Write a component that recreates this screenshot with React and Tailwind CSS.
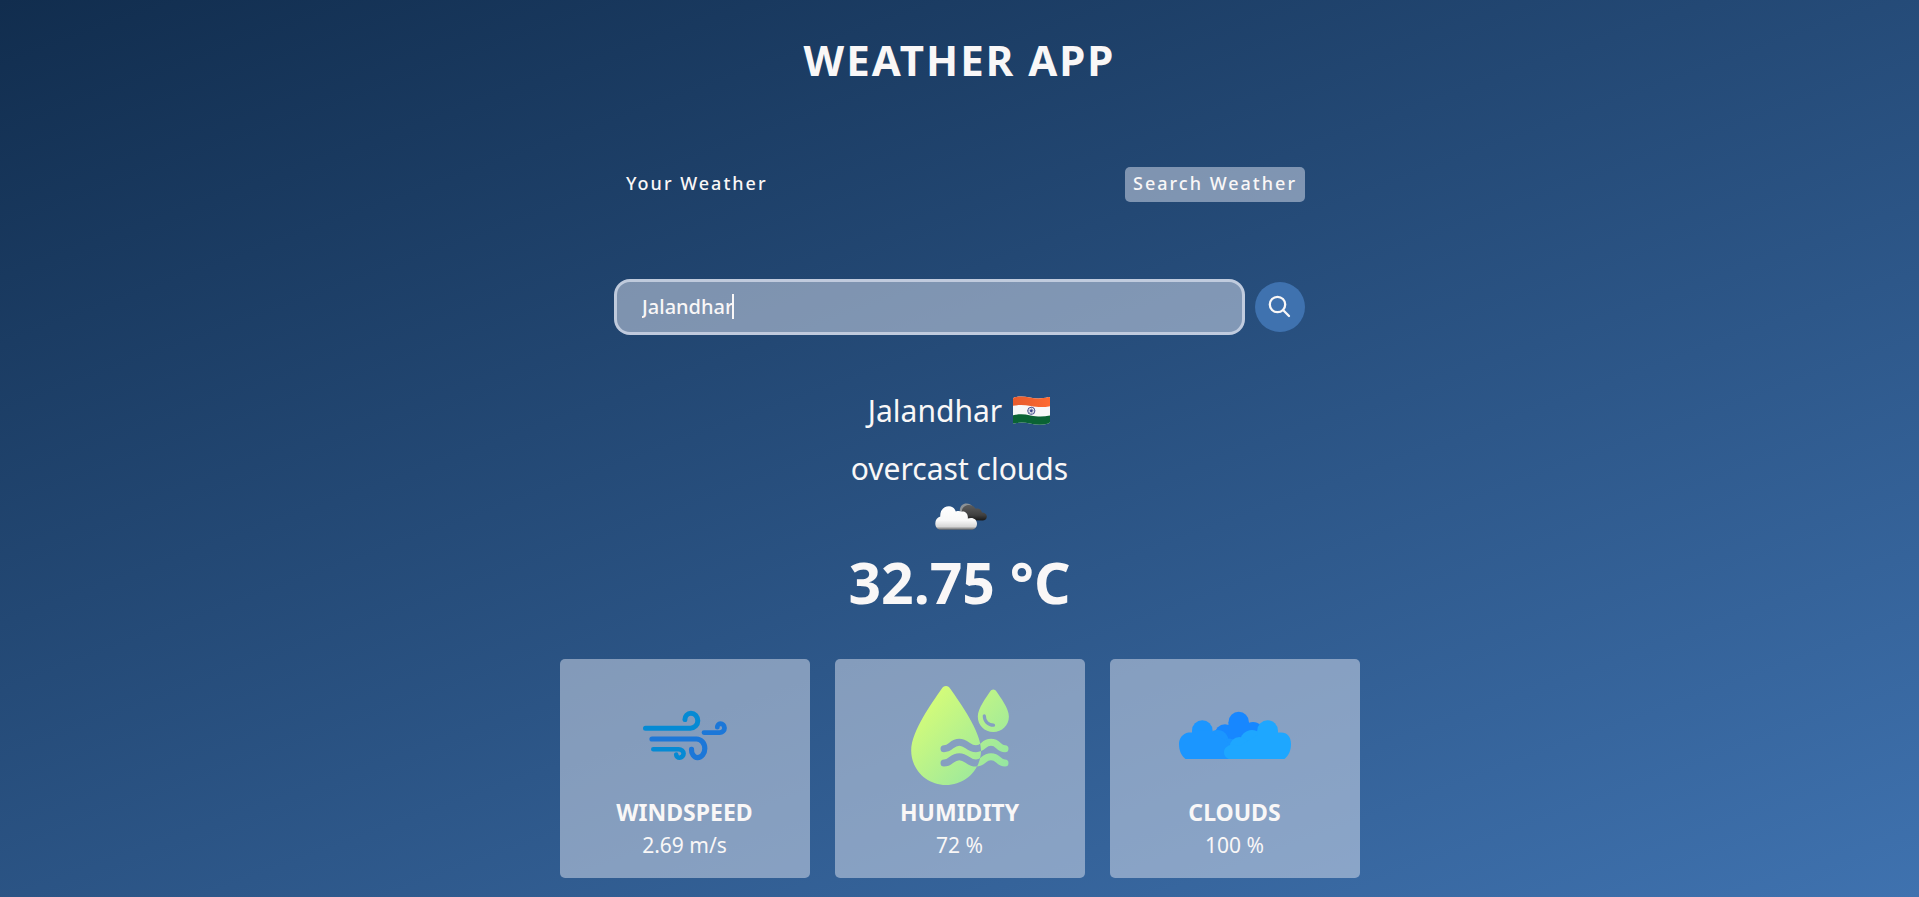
import React, { useState } from "react";

const WAVE =
  "C61 78.7 61.5 72.3 69.3 72.3S78 78.7 86 78.7S93 72.3 101 72.3S108 78.7 115 78.7";
const BIG_DROP =
  "M56 16C58 16 59.3 17.2 60.5 19C70 33 91 61 91 80.5C91 99.5 75.500 115 56 115S21.200 99.500 21.200 80.500C21.200 61 42 33 51.500 19C52.700 17.200 54 16 56 16Z";

function WindIcon() {
  return (
    <svg viewBox="15 -5 100 100" className="h-[100px] w-[100px]" fill="none" strokeLinecap="round" strokeLinejoin="round" aria-hidden="true">
      <g stroke="#058ad4">
        <path strokeWidth="5" d="M25.500 38.300H70.300A7.500 7.500 0 0 0 77.800 30.800A6.900 7.600 0 0 0 70.900 23.200A6 6.200 0 0 0 64.900 29.600" />
        <path strokeWidth="4.600" d="M33.300 59.200H58.500A5 4.400 0 0 1 63.600 63.600A4.200 4.100 0 0 1 59.500 67.700A3.300 3.300 0 0 1 56.200 64.600" />
      </g>
      <g stroke="#1c77d8">
        <path strokeWidth="5.200" d="M32 49H76.500A8.300 9.500 0 0 1 84.800 58.500A7.400 9.200 0 0 1 77.600 67.700A6.600 7.800 0 0 1 71.500 59.300" />
        <path strokeWidth="4.800" d="M84 42.600H99.500A4.900 4.700 0 0 0 104.500 37.900A4.100 4.200 0 0 0 100.400 33.700A3.200 3.400 0 0 0 97.300 37.200" />
      </g>
    </svg>
  );
}

function HumidityIcon() {
  return (
    <svg viewBox="20 15 100 100" className="h-[100px] w-[100px]" fill="none" aria-hidden="true">
      <defs>
        <linearGradient id="lime" gradientUnits="userSpaceOnUse" x1="34" y1="34" x2="108" y2="104">
          <stop offset="0" stopColor="#d4fc79" />
          <stop offset="1" stopColor="#96e6a1" />
        </linearGradient>
        <mask id="cutWaves" maskUnits="userSpaceOnUse" x="0" y="0" width="140" height="130">
          <rect width="140" height="130" fill="white" />
          <g stroke="black" strokeWidth="7" strokeLinecap="round">
            <path d={"M54 78.7" + WAVE} />
            <path d={"M54 78.7" + WAVE} transform="translate(0 14.400)" />
          </g>
        </mask>
        <mask id="cutDrop" maskUnits="userSpaceOnUse" x="0" y="0" width="140" height="130">
          <rect width="140" height="130" fill="white" />
          <path d={BIG_DROP} fill="black" />
        </mask>
      </defs>
      <path d={BIG_DROP} fill="url(#lime)" mask="url(#cutWaves)" />
      <g mask="url(#cutDrop)" stroke="url(#lime)" strokeWidth="7" strokeLinecap="round">
        <path d={"M54 78.7" + WAVE} />
        <path d="M54 93.1C61 93.1 61.500 86.700 69.300 86.700S78 93.100 86 93.100S93 86.700 101 86.700S108 93.100 115 93.100" />
      </g>
      <path
        fill="url(#lime)"
        d="M103.300 19.400C104.600 19.400 105.500 20.100 106.300 21.300C110.500 27.500 118.900 38.500 118.900 46.500C118.900 55.300 112 62 103.300 62S87.800 55.300 87.800 46.500C87.800 38.500 96.200 27.500 100.300 21.300C101.100 20.100 102 19.400 103.300 19.400Z"
      />
      <path d="M94.300 45.800C94.300 51.300 98.300 55.200 103.500 55.200" stroke="#859fc1" strokeWidth="3.200" strokeLinecap="round" />
    </svg>
  );
}

function CloudsIcon() {
  return (
    <svg viewBox="15 -5 120 100" className="h-[100px] w-[120px]" aria-hidden="true">
      <g fill="#1787ff">
        <circle cx="78.700" cy="32" r="10.200" />
        <circle cx="65" cy="44.500" r="10.300" />
        <circle cx="93" cy="42.500" r="10.600" />
        <path d="M57 44H100V66H57Z" />
        <path d="M68.500 32H89V45H68.500Z" />
      </g>
      <g fill="#1b96ff">
        <circle cx="42.300" cy="40.500" r="10.300" />
        <circle cx="57.500" cy="51" r="11" />
        <circle cx="69" cy="58" r="9.500" />
        <path d="M28.500 42.500C22.500 43.500 19 48.500 19 54C19 60 21 65.500 25.500 69H74V56L52 42.500V40.500H32V42.500Z" />
      </g>
      <g fill="#1ea7ff">
        <circle cx="107.600" cy="40.500" r="10.300" />
        <circle cx="92" cy="52" r="12" />
        <circle cx="79.500" cy="57" r="10" />
        <path d="M72 54.500C67 55.500 64 58.500 64 62C64 65.500 66 68.300 69.500 69H124.500C129 65.500 131 60 131 54C131 47 127.500 42.400 121 42.400H117.900V40.500H97.300V45L80 56Z" />
      </g>
    </svg>
  );
}

function OvercastIcon() {
  return (
    <svg viewBox="14 1 50 50" className="h-[50px] w-[50px] overflow-visible" role="img" aria-label="overcast clouds">
      <defs>
        <linearGradient id="white" x1="0" y1="0" x2="0" y2="1">
          <stop offset="0" stopColor="#ffffff" />
          <stop offset="0.600" stopColor="#f8f8f8" />
          <stop offset="0.860" stopColor="#d8d8d8" />
          <stop offset="1" stopColor="#666666" />
        </linearGradient>
        <linearGradient id="dark" x1="0" y1="0" x2="0" y2="1">
          <stop offset="0" stopColor="#5d5d5d" />
          <stop offset="0.650" stopColor="#404040" />
          <stop offset="1" stopColor="#171717" />
        </linearGradient>
      </defs>
      <path fill="#8d9296" d="M40 23C39 17 42 13.500 46.500 13.500C49 13.500 51 14.600 52 16L44 24Z" />
      <path
        fill="url(#dark)"
        d="M42 30V20C43 16.500 46 15 49 15C52 15 54.500 16.500 55.500 18.800C58.500 17.800 61.500 19.500 62 22.600C64.800 22.600 66.800 24.300 66.800 26.500C66.800 29 65 30.600 62.500 30.600Z"
      />
      <path
        fill="url(#white)"
        d="M21 39.800C17.500 39.800 15.300 37 15.300 33.500C15.300 30 17.200 27.500 20.300 26.500C19.800 20.500 23.500 16.300 29 16.300C32.200 16.300 34.500 18 35.800 21.600C38 20.800 40 21 41.500 21.800C45 20.500 48.500 24 47.800 28.600C48.600 28.200 49.800 28 51 28C54.500 28 57 30.400 57 33.700C57 37 54.700 39.800 51 39.800Z"
      />
    </svg>
  );
}

function IndiaFlag() {
  return (
    <svg viewBox="24 10 39 31" className="h-[31px] w-[39px]" role="img" aria-label="India">
      <defs>
        <clipPath id="cloth">
          <path d="M25 14Q25 12.700 26.500 12.300C31 11.200 36 11.200 42 12.500C48 13.800 54 13.800 60.500 12Q62 11.600 62 13V36.800Q62 38.100 60.500 38.600C54 40.500 48 40 42 38.600C36 37.200 31 37.200 26.500 38.600Q25 39.100 25 37.800Z" />
        </clipPath>
        <linearGradient id="saffron" x1="0" y1="0" x2="1" y2="0">
          <stop offset="0" stopColor="#e85a2c" />
          <stop offset="0.500" stopColor="#f0622f" />
          <stop offset="1" stopColor="#ff6a30" />
        </linearGradient>
      </defs>
      <g clipPath="url(#cloth)">
        <path fill="#f7f7f7" d="M24 10H63V41H24Z" />
        <path fill="url(#saffron)" d="M24 10H63V21C56 22.500 50 22.300 42.500 21C36 19.800 30 19.800 24 21Z" />
        <path fill="#0a6334" d="M24 30.500C30 29 36 29 42.500 30.400C50 32 56 31.800 63 30.300V42H24Z" />
      </g>
      <g fill="none" stroke="#3b4388">
        <circle cx="43.300" cy="25.800" r="3.600" strokeWidth="0.900" />
        <path strokeWidth="0.450" d="M39.700 25.800H46.900M43.300 22.200V29.400M40.800 23.300L45.800 28.300M45.800 23.300L40.800 28.300" />
      </g>
      <circle cx="43.300" cy="25.800" r="1.300" fill="#3b4388" />
    </svg>
  );
}

function SearchIcon() {
  return (
    <svg viewBox="1 1 24 24" className="h-6 w-6" fill="none" stroke="#f9f7f7" strokeWidth="2.300" strokeLinecap="round" aria-hidden="true">
      <circle cx="10.500" cy="10.500" r="7.700" />
      <path d="M16.300 16.300L22 22" />
    </svg>
  );
}

function ParameterCard({ icon, title, value }) {
  return (
    <article className="flex w-[250px] flex-col items-center rounded-[5px] bg-[#dbe2ef]/50 px-4 pt-[26px] pb-4">
      {icon}
      <h2 className="mt-[11px] text-[23px] leading-8 font-bold uppercase">{title}</h2>
      <p className="text-[21px] leading-[34px]">{value}</p>
    </article>
  );
}

export default function App() {
  const [city, setCity] = useState("Jalandhar");
  const [typing, setTyping] = useState(true);

  return (
    <main className="flex min-h-screen flex-col items-center bg-[linear-gradient(160deg,#112d4e_0%,#3f72af_100%)] px-4 pb-[19px] font-['Noto_Sans',sans-serif] text-[#f9f7f7]">
      <h1 className="pt-[31px] text-center text-[42px] leading-[58px] font-bold tracking-[2px] uppercase">Weather App</h1>

      <nav className="mt-[78px] flex w-full max-w-[691px] justify-between">
        <button type="button" className="rounded-[5px] px-3 pb-[2px] text-lg leading-[33px] font-medium tracking-[2px]">
          Your Weather
        </button>
        <button type="button" className="rounded-[5px] bg-[#dbe2ef]/50 px-2 pb-[2px] text-lg leading-[33px] font-medium tracking-[2px]">
          Search Weather
        </button>
      </nav>

      <form className="mt-[77px] flex w-full max-w-[691px] items-center gap-[10px]" onSubmit={(e) => e.preventDefault()}>
        <div className="relative flex-1">
          <input
            type="text"
            aria-label="City"
            value={city}
            onChange={(e) => {
              setCity(e.target.value);
              setTyping(false);
            }}
            className="h-14 w-full rounded-2xl border-3 border-[#dbe2ef]/70 bg-[#dbe2ef]/50 px-[25px] pb-[2px] text-xl font-medium outline-none"
          />
          {typing && <span className="pointer-events-none absolute top-[15px] left-[118px] h-[25px] w-[2px] bg-[#f9f7f7]" />}
        </div>
        <button type="submit" aria-label="Search" className="flex h-[50px] w-[50px] items-center justify-center rounded-full bg-[#3f72af]">
          <SearchIcon />
        </button>
      </form>

      <section className="mt-[53px] flex flex-col items-center">
        <div className="flex items-center gap-[10px]">
          <p className="text-3xl leading-[45px]">Jalandhar</p>
          <IndiaFlag />
        </div>
        <p className="mt-[13px] text-3xl leading-[45px]">overcast clouds</p>
        <OvercastIcon />
        <p className="mt-[3px] text-[57px] leading-[76px] font-bold">32.75 °C</p>
      </section>

      <section className="mt-[39px] flex flex-wrap justify-center gap-[25px]">
        <ParameterCard icon={<WindIcon />} title="Windspeed" value="2.69 m/s" />
        <ParameterCard icon={<HumidityIcon />} title="Humidity" value="72 %" />
        <ParameterCard icon={<CloudsIcon />} title="Clouds" value="100 %" />
      </section>
    </main>
  );
}
